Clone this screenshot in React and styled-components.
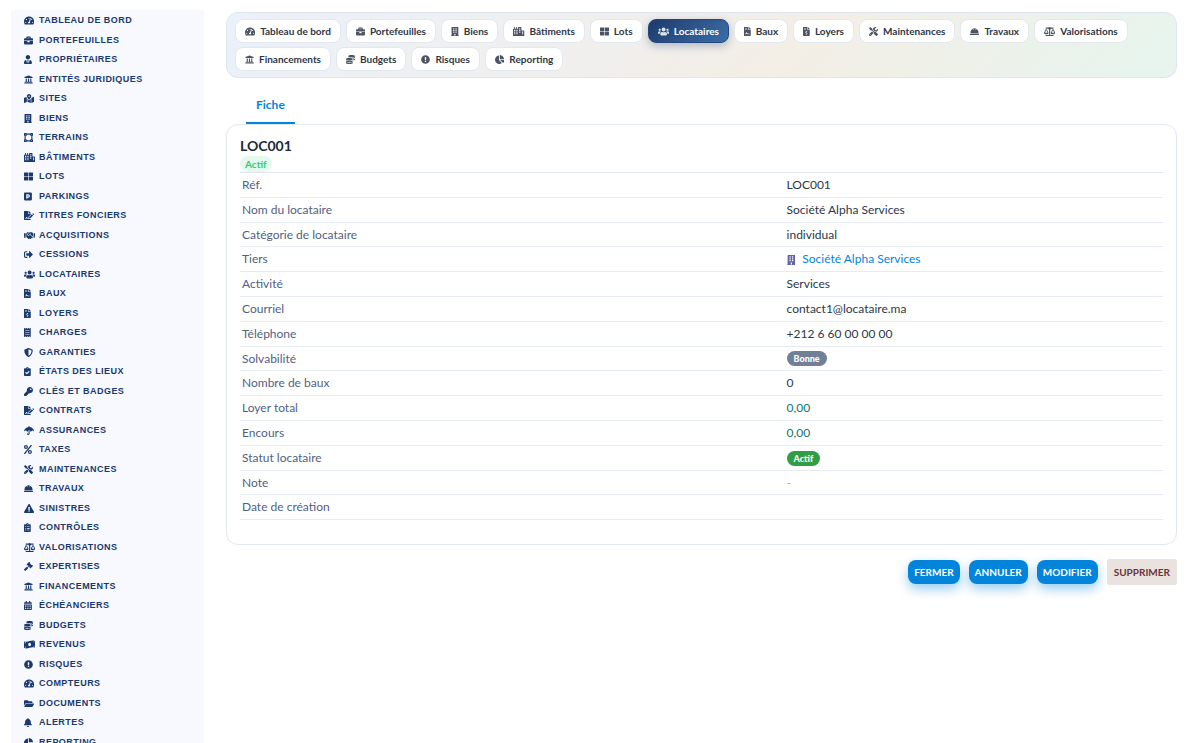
import { useState } from "react";
import styled, { createGlobalStyle } from "styled-components";
import { IconContext } from "react-icons";
import {
    FaTachometerAlt, FaBriefcase, FaUserTie, FaUniversity, FaMapMarkedAlt, FaBuilding,
    FaVectorSquare, FaCity, FaThLarge, FaParking, FaFileSignature, FaHandshake,
    FaSignOutAlt, FaUsers, FaFileContract, FaFileInvoiceDollar, FaReceipt, FaShieldAlt,
    FaClipboardCheck, FaKey, FaUmbrella, FaPercent, FaTools, FaHardHat,
    FaExclamationTriangle, FaClipboardList, FaBalanceScale, FaGavel, FaCalendarAlt,
    FaCoins, FaMoneyBillWave, FaExclamationCircle, FaFolderOpen, FaBell, FaChartPie
} from "react-icons/fa";


const GlobalStyle = createGlobalStyle`
    * { box-sizing: border-box; }
    body {
        margin: 0;
        background: #fff;
        color: #2d3748;
        font-family: Lato, "Open Sans", sans-serif;
    }
    a { text-decoration: none; }
`;

const Layout = styled.div`
    display: flex;
    align-items: flex-start;
    gap: 22px;
    height: 100vh;
    padding: 10px 23px 0 11px;
    overflow: hidden;
`;

const Sidebar = styled.nav`
    flex: 0 0 193px;
    height: 100%;
    overflow-y: auto;
    scrollbar-width: none;
    background: #f8f9fe;
`;

const Menu = styled.ul`
    list-style: none;
    margin: 0;
    padding: 1px 13px 0;
    font-size: 13px;
    line-height: 1.5;
`;

const MenuItem = styled.li`
    display: flex;
    align-items: center;
    height: 1.5em;
`;

const MenuLink = styled.a`
    display: flex;
    align-items: center;
    gap: 3px;
    color: #1a3a6e;
    font-family: "Liberation Sans", Arial, sans-serif;
    font-size: 9px;
    font-weight: 700;
    letter-spacing: 0.05em;
    text-transform: uppercase;
    white-space: nowrap;
`;

const MenuIcon = styled.span`
    display: flex;
    width: 12px;
    svg { flex: none; height: 9px; width: auto; }
`;

const Main = styled.main`
    flex: 1;
    min-width: 0;
    padding-top: 2px;
`;

const ChipBar = styled.nav`
    display: flex;
    flex-wrap: wrap;
    gap: 4px 5px;
    padding: 6px 8px;
    border: 1px solid #dde5f0;
    border-radius: 12px;
    background: linear-gradient(135deg, #ebf1fa 0%, #f3eee6 60%, #e6f5ee 100%);
`;

const Chip = styled.a`
    display: flex;
    align-items: center;
    gap: 5px;
    height: 24px;
    padding: 0 9px;
    border: 1px solid ${({ $active }) => ($active ? "#24487f" : "#e2e8f0")};
    border-radius: 8px;
    background: ${({ $active }) => ($active ? "linear-gradient(135deg, #1e3a6b, #3a6ea8)" : "#fff")};
    box-shadow: ${({ $active }) => ($active ? "0 3px 8px rgba(30, 58, 107, 0.3)" : "none")};
    color: ${({ $active }) => ($active ? "#fff" : "#2d3748")};
    font-size: 10px;
    font-weight: 700;
    white-space: nowrap;
    svg { flex: none; height: 9px; width: auto; opacity: 0.85; }
`;

const Tabs = styled.div`
    display: flex;
    padding: 8px 20px 0;
`;

const Tab = styled.button`
    height: 38px;
    padding: 0 10px;
    border: 0;
    border-bottom: 2px solid #0284db;
    background: none;
    color: #0284db;
    font: inherit;
    font-size: 12px;
    font-weight: 700;
`;

const Card = styled.section`
    padding: 12px 13px 24px;
    border: 1px solid #e2e8f0;
    border-radius: 12px;
`;

const Title = styled.h1`
    margin: 0;
    color: #1e293b;
    font-size: 14px;
    line-height: 17px;
`;

const StatusTag = styled.span`
    display: block;
    width: fit-content;
    margin-top: 2px;
    padding: 0 5px;
    border-radius: 8px;
    background: #e6f9ef;
    color: #2dce71;
    font-size: 10px;
    font-weight: 700;
    line-height: 16px;
`;

const Details = styled.table`
    width: 100%;
    border-collapse: separate;
    border-spacing: 0;
    border-top: 1px solid #dfe5ef;
    font-size: 12px;
    line-height: 1.4;
    text-align: left;
`;

const Label = styled.th`
    width: 59%;
    padding: 4px 2px 3px;
    border-bottom: 1px solid #e6ebf4;
    color: #525f7f;
    font-weight: 400;
`;

const Value = styled.td`
    padding: 4px 2px 3px;
    border-bottom: 1px solid #e6ebf4;
    color: ${({ $tone }) => ({ money: "#0f766e", muted: "#a0aec0" }[$tone] || "#2d3748")};
`;

const PartnerLink = styled.a`
    display: flex;
    align-items: center;
    gap: 7px;
    color: #0284db;
    svg { flex: none; height: 10px; width: auto; color: #6264a7; }
`;

const Badge = styled.span`
    display: block;
    width: fit-content;
    padding: 0 7px;
    border-radius: 8px;
    background: ${({ $color }) => $color};
    color: #fff;
    font-size: 9px;
    font-weight: 900;
    line-height: 15px;
`;

const Actions = styled.div`
    display: flex;
    justify-content: flex-end;
    align-items: center;
    gap: 9px;
    padding-top: 14px;
`;

const Button = styled.button`
    height: 24px;
    padding: 0 6px;
    border: 0;
    border-radius: 8px;
    background: #0284db;
    box-shadow: 0 5px 12px rgba(2, 132, 219, 0.4);
    color: #fff;
    font: inherit;
    font-size: 10px;
    font-weight: 700;
    text-transform: uppercase;
`;

const DeleteButton = styled(Button)`
    height: 26px;
    padding: 0 7px;
    border-radius: 2px;
    background: #e9e2df;
    box-shadow: none;
    color: #6b3434;
`;


const menu = [
    ["Tableau de bord", FaTachometerAlt],
    ["Portefeuilles", FaBriefcase],
    ["Propriétaires", FaUserTie],
    ["Entités juridiques", FaUniversity],
    ["Sites", FaMapMarkedAlt],
    ["Biens", FaBuilding],
    ["Terrains", FaVectorSquare],
    ["Bâtiments", FaCity],
    ["Lots", FaThLarge],
    ["Parkings", FaParking],
    ["Titres fonciers", FaFileSignature],
    ["Acquisitions", FaHandshake],
    ["Cessions", FaSignOutAlt],
    ["Locataires", FaUsers],
    ["Baux", FaFileContract],
    ["Loyers", FaFileInvoiceDollar],
    ["Charges", FaReceipt],
    ["Garanties", FaShieldAlt],
    ["États des lieux", FaClipboardCheck],
    ["Clés et badges", FaKey],
    ["Contrats", FaFileSignature],
    ["Assurances", FaUmbrella],
    ["Taxes", FaPercent],
    ["Maintenances", FaTools],
    ["Travaux", FaHardHat],
    ["Sinistres", FaExclamationTriangle],
    ["Contrôles", FaClipboardList],
    ["Valorisations", FaBalanceScale],
    ["Expertises", FaGavel],
    ["Financements", FaUniversity],
    ["Échéanciers", FaCalendarAlt],
    ["Budgets", FaCoins],
    ["Revenus", FaMoneyBillWave],
    ["Risques", FaExclamationCircle],
    ["Compteurs", FaTachometerAlt],
    ["Documents", FaFolderOpen],
    ["Alertes", FaBell],
    ["Reporting", FaChartPie],
];

const chips = [
    ["Tableau de bord", FaTachometerAlt],
    ["Portefeuilles", FaBriefcase],
    ["Biens", FaBuilding],
    ["Bâtiments", FaCity],
    ["Lots", FaThLarge],
    ["Locataires", FaUsers],
    ["Baux", FaFileContract],
    ["Loyers", FaFileInvoiceDollar],
    ["Maintenances", FaTools],
    ["Travaux", FaHardHat],
    ["Valorisations", FaBalanceScale],
    ["Financements", FaUniversity],
    ["Budgets", FaCoins],
    ["Risques", FaExclamationCircle],
    ["Reporting", FaChartPie],
];

const details = [
    { label: "Réf.", value: "LOC001" },
    { label: "Nom du locataire", value: "Société Alpha Services" },
    { label: "Catégorie de locataire", value: "individual" },
    { label: "Tiers", value: <PartnerLink href="#tiers"><FaBuilding />Société Alpha Services</PartnerLink> },
    { label: "Activité", value: "Services" },
    { label: "Courriel", value: "contact1@locataire.ma" },
    { label: "Téléphone", value: "+212 6 60 00 00 00" },
    { label: "Solvabilité", value: <Badge $color="#718096">Bonne</Badge> },
    { label: "Nombre de baux", value: "0" },
    { label: "Loyer total", value: "0,00", tone: "money" },
    { label: "Encours", value: "0,00", tone: "money" },
    { label: "Statut locataire", value: <Badge $color="#2f9e44">Actif</Badge> },
    { label: "Note", value: "-", tone: "muted" },
    { label: "Date de création", value: "" },
];

// "auto" keeps each icon's own proportions, the wide ones would shrink in a square
const iconConfig = { size: "auto" };


const App = () => {
    const [active, setActive] = useState("Locataires");

    return(
        <IconContext.Provider value={iconConfig}>
            <GlobalStyle />
            <Layout>
                <Sidebar aria-label="Menu">
                    <Menu>
                        {menu.map(([name, Icon]) => (
                            <MenuItem key={name}>
                                <MenuLink href="#menu"><MenuIcon><Icon /></MenuIcon>{name}</MenuLink>
                            </MenuItem>
                        ))}
                    </Menu>
                </Sidebar>
                <Main>
                    <ChipBar aria-label="Modules">
                        {chips.map(([name, Icon]) => (
                            <Chip key={name} href="#module" $active={name === active} onClick={() => setActive(name)}>
                                <Icon />{name}
                            </Chip>
                        ))}
                    </ChipBar>
                    <Tabs>
                        <Tab type="button">Fiche</Tab>
                    </Tabs>
                    <Card>
                        <Title>LOC001</Title>
                        <StatusTag>Actif</StatusTag>
                        <Details>
                            <tbody>
                                {details.map(({ label, value, tone }) => (
                                    <tr key={label}>
                                        <Label scope="row">{label}</Label>
                                        <Value $tone={tone}>{value}</Value>
                                    </tr>
                                ))}
                            </tbody>
                        </Details>
                    </Card>
                    <Actions>
                        <Button type="button">Fermer</Button>
                        <Button type="button">Annuler</Button>
                        <Button type="button">Modifier</Button>
                        <DeleteButton type="button">Supprimer</DeleteButton>
                    </Actions>
                </Main>
            </Layout>
        </IconContext.Provider>
    )
}

export default App
